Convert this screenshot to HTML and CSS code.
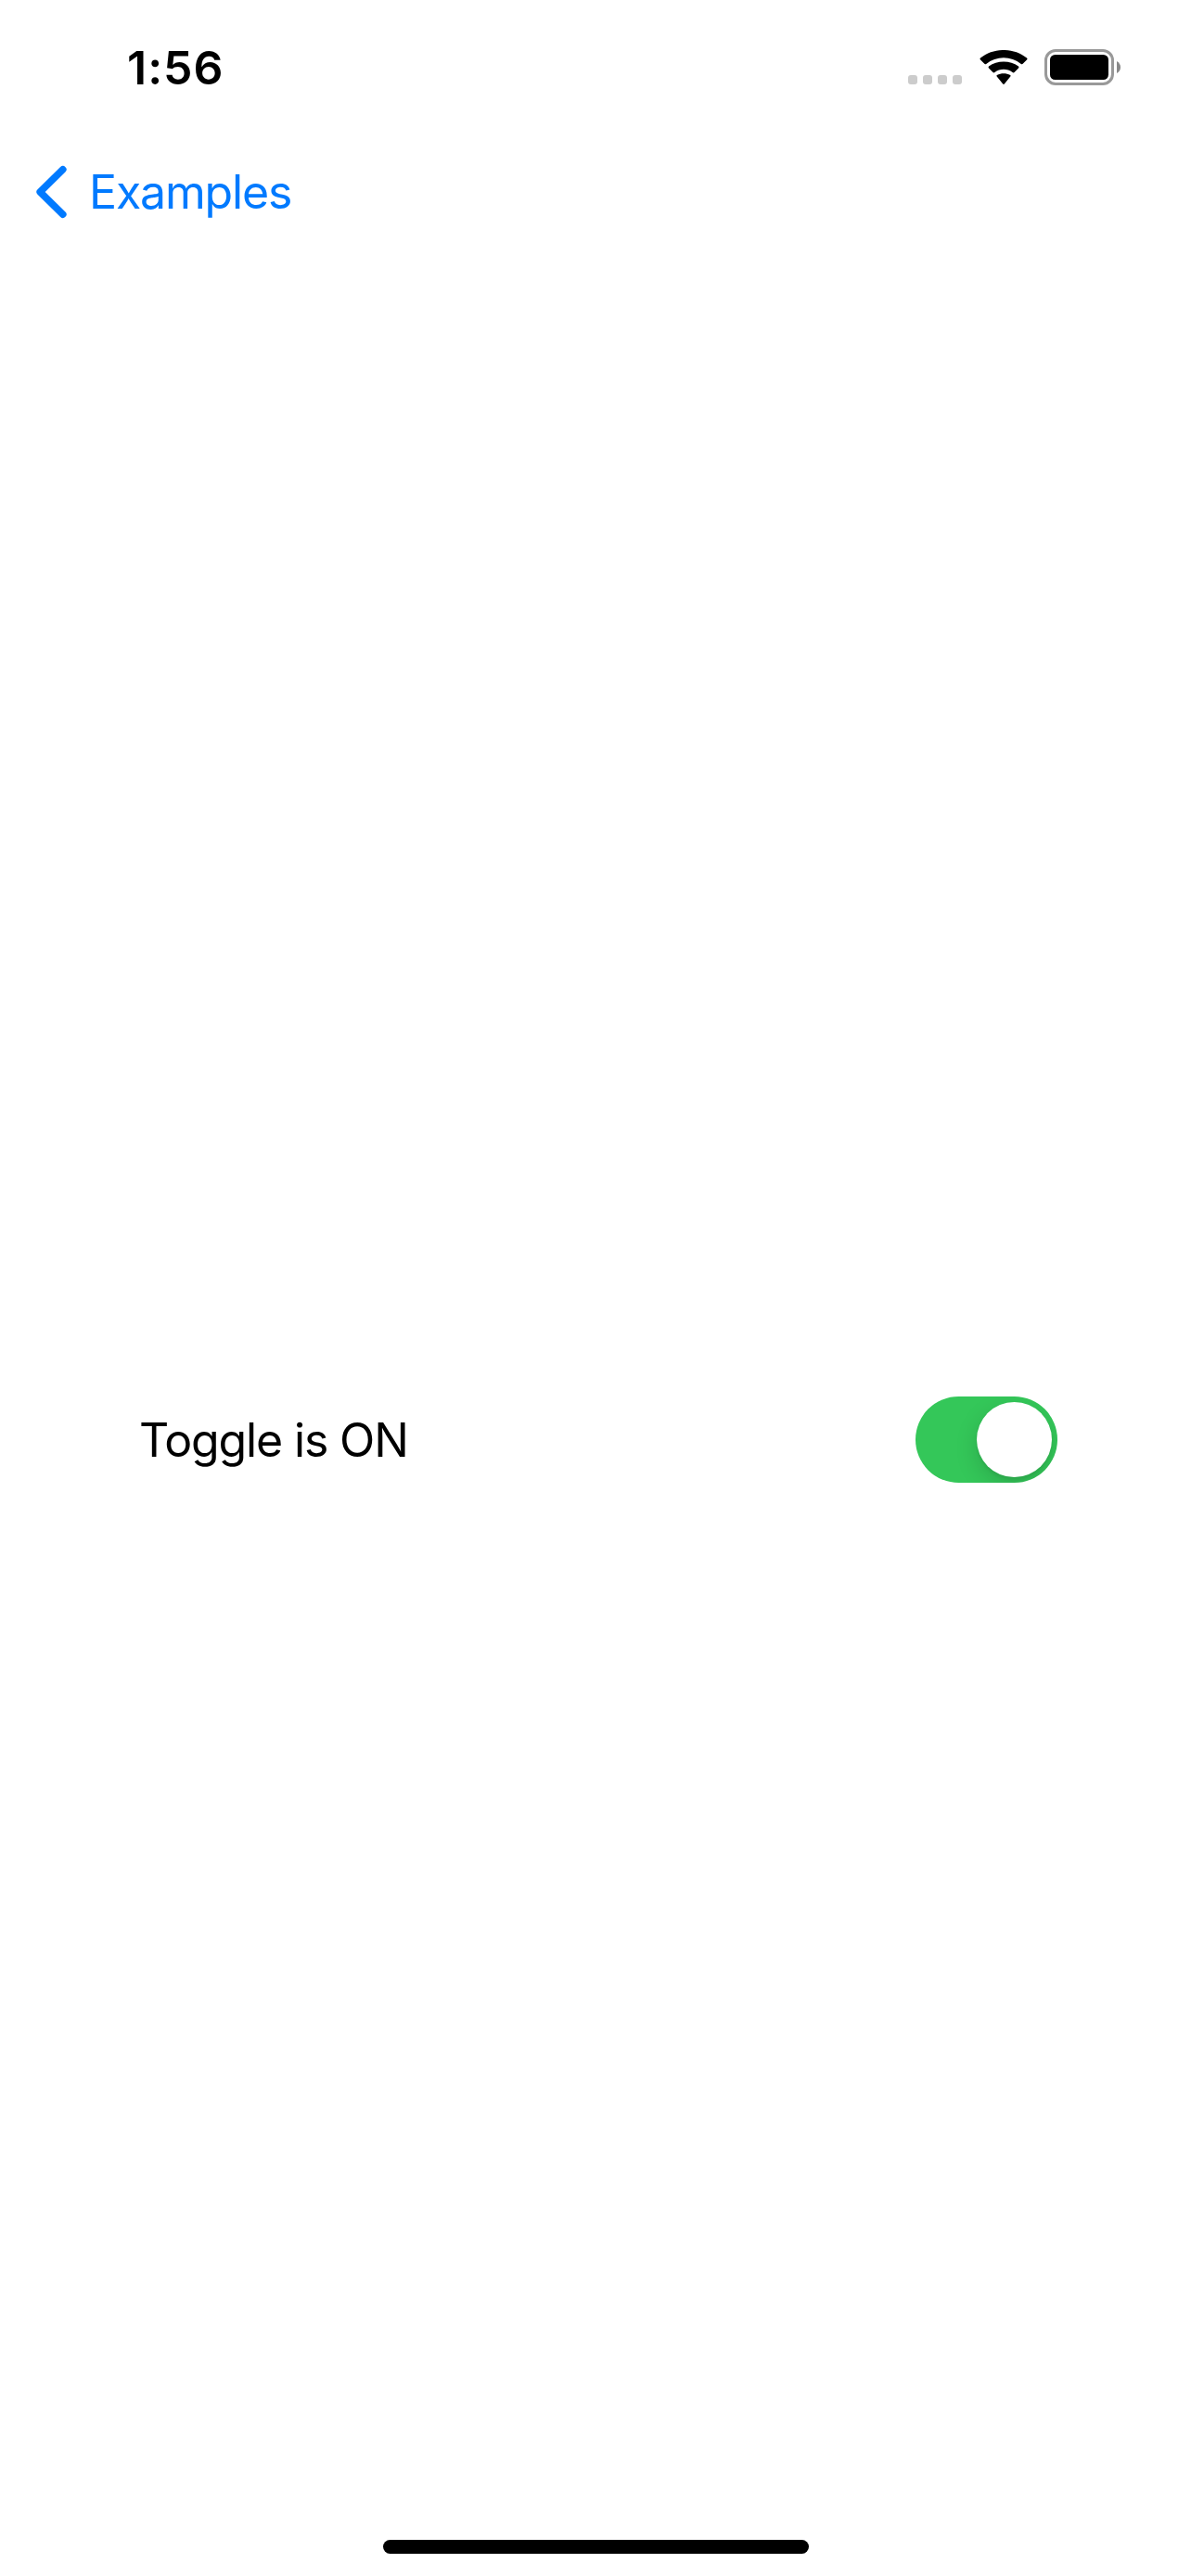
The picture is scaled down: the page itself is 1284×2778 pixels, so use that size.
FILE: index.html
```html
<!DOCTYPE html>
<html lang="en">
<head>
<meta charset="utf-8">
<title>Toggle</title>
<link rel="stylesheet" href="styles.css">
</head>
<body>
<div class="screen">
  <header class="status-bar">
    <span class="time">1:56</span>
    <div class="indicators">
      <div class="signal"><i></i><i></i><i></i><i></i></div>
      <svg class="wifi" width="52" height="38" viewBox="0 0 52 38">
        <path d="M1 10.5Q0 9.5 1 8.6C15-2.9 37-2.9 51 8.6Q52 9.5 51 10.5L46.7 14.8Q45.8 15.7 44.8 14.9C34 6 18 6 7.200 14.900Q6.200 15.700 5.300 14.800Z"/>
        <path d="M10 19.500Q9 18.500 10 17.600C19 10.800 33 10.800 42 17.600Q43 18.500 42 19.500L37.500 24Q36.600 24.800 35.600 24C30 19.700 22 19.700 16.400 24Q15.400 24.800 14.500 24Z"/>
        <path d="M18.700 28.600Q17.800 27.700 18.900 26.900C23 24.700 29 24.700 33.100 26.900Q34.200 27.700 33.300 28.600L26.800 36.500Q26 37.300 25.200 36.500Z"/>
      </svg>
      <svg class="battery" width="84" height="39" viewBox="0 0 84 39">
        <rect x="1.500" y="1.500" width="72" height="36" rx="10.500" fill="none" stroke="#999" stroke-width="3"/>
        <rect x="6" y="6" width="63" height="27" rx="5.500"/>
        <path d="M78 13Q82 15.500 82 19.500Q82 23.500 78 26Z" fill="#888"/>
      </svg>
    </div>
  </header>
  <nav class="nav-bar">
    <a class="back">
      <svg width="34" height="58" viewBox="0 0 34 58">
        <path d="M29.800 4.800L5.200 29L29.800 53.200" fill="none" stroke="#007aff" stroke-width="7.600" stroke-linecap="round" stroke-linejoin="round"/>
      </svg>
      <span class="back-label">Examples</span>
    </a>
  </nav>
  <main class="content">
    <div class="row">
      <span class="label">Toggle is ON</span>
      <div class="switch" role="switch" aria-checked="true"><div class="knob"></div></div>
    </div>
  </main>
  <footer class="home-area"><div class="home-indicator"></div></footer>
</div>
</body>
</html>
```
FILE: styles.css
```css
body {
  margin: 0;
  background: #fff;
  color: #000;
  font-family: Inter, "Liberation Sans", sans-serif;
}
.screen {
  display: flex;
  flex-direction: column;
  width: 1284px;
  height: 2778px;
  overflow: hidden;
}
.status-bar {
  display: flex;
  justify-content: space-between;
  box-sizing: border-box;
  height: 141px;
  padding: 53px 74px 0 137px;
}
.time {
  height: 40px;
  line-height: 40px;
  font-size: 50px;
  font-weight: 600;
  letter-spacing: 1px;
}
.indicators {
  display: flex;
  height: 39px;
}
.signal {
  display: flex;
  gap: 6px;
  padding-top: 28px;
  margin-right: 19px;
}
.signal i {
  width: 10px;
  height: 10px;
  border-radius: 3px;
  background: #ccc;
}
.wifi {
  margin: 1px 18px 0 0;
}
.nav-bar {
  display: flex;
  align-items: center;
  height: 132px;
  padding-left: 38px;
}
.back {
  display: flex;
  align-items: center;
  gap: 24px;
  color: #007aff;
}
.back-label,
.label {
  font-size: 50px;
  line-height: 60px;
  letter-spacing: -1.15px;
  white-space: nowrap;
}
.content {
  flex: 1;
  padding: 1233px 144px 0 150px;
}
.row {
  display: flex;
  align-items: center;
  justify-content: space-between;
}
.switch {
  display: flex;
  justify-content: flex-end;
  box-sizing: border-box;
  width: 153px;
  height: 93px;
  padding: 6px;
  border-radius: 47px;
  background: #34c759;
  overflow: hidden;
}
.knob {
  width: 81px;
  height: 81px;
  border-radius: 50%;
  background: #fff;
  box-shadow: 0 9px 24px rgba(0, 0, 0, 0.15), 0 3px 3px rgba(0, 0, 0, 0.06);
}
.home-area {
  display: flex;
  align-items: flex-end;
  justify-content: center;
  height: 78px;
  padding-bottom: 24px;
}
.home-indicator {
  width: 459px;
  height: 15px;
  border-radius: 8px;
  background: #000;
}
```
